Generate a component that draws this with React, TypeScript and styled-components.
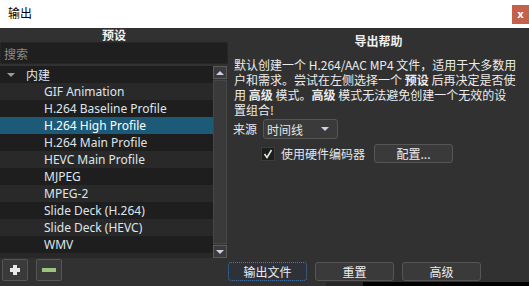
import React from "react";
import styled, { createGlobalStyle } from "styled-components";

const cjk = `"Noto Sans CJK SC", "Noto Sans", sans-serif`;
const latin = `"Noto Sans", "Noto Sans CJK SC", sans-serif`;

const GlobalStyle = createGlobalStyle`
  html, body {
    margin: 0;
    padding: 0;
    background: #ffffff;
  }
  body {
    width: 529px;
    height: 286px;
    overflow: hidden;
    font-family: ${cjk};
    font-size: 12px;
  }
`;

const Window = styled.div`
  display: flex;
  flex-direction: column;
  width: 529px;
  height: 286px;
`;

const TitleBar = styled.div`
  display: flex;
  justify-content: space-between;
  align-items: flex-start;
  height: 28px;
  background: #ffffff;
  color: #000000;
`;

const TitleText = styled.div`
  padding: 6px 0 0 8px;
  line-height: 14px;
  font-size: 12px;
`;

const CloseButton = styled.div`
  display: flex;
  align-items: center;
  justify-content: center;
  width: 17px;
  height: 19px;
  margin-top: 5px;
  background: #c5614b;
  color: #ffffff;
  font-family: "DejaVu Sans", sans-serif;
  font-size: 10px;
  font-weight: bold;
`;

const Body = styled.div`
  display: flex;
  height: 254px;
  background: #313131;
  color: #e2e2e2;
`;

const LeftPanel = styled.div`
  display: flex;
  flex-direction: column;
  width: 228px;
`;

const PanelTitle = styled.div`
  height: 14px;
  line-height: 14px;
  text-align: center;
  font-weight: bold;
  color: #f0f0f0;
`;

const SearchBox = styled.div`
  height: 22px;
  box-sizing: border-box;
  padding: 3px 3px;
  line-height: 16px;
  background: #1f1f1f;
  border: 1px dotted #2c2c2c;
  color: #8a8a8a;
`;

const TreeWrap = styled.div`
  display: flex;
  height: 192px;
  margin-top: 2px;
`;

const TreeList = styled.div`
  flex: 1;
  display: flex;
  flex-direction: column;
  overflow: hidden;
  background: #282828;
`;

const Row = styled.div<{ $alt: boolean; $selected?: boolean; $indent: number }>`
  display: flex;
  align-items: center;
  flex-shrink: 0;
  height: 17px;
  padding-left: ${(p) => p.$indent}px;
  background: ${(p) => (p.$selected ? "#1c5a78" : p.$alt ? "#1e1e1e" : "#292929")};
  color: ${(p) => (p.$selected ? "#ffffff" : "#dfe5ec")};
  font-family: ${latin};
  font-size: 12px;
  white-space: nowrap;
`;

const GroupText = styled.span`
  font-family: ${cjk};
  font-size: 12px;
`;

const Caret = styled.span`
  width: 0;
  height: 0;
  margin-right: 11px;
  border-left: 4px solid transparent;
  border-right: 4px solid transparent;
  border-top: 4px solid #9a9a9a;
`;

const ScrollBar = styled.div`
  display: flex;
  flex-direction: column;
  width: 14px;
  margin-right: 1px;
`;

const ScrollButton = styled.div`
  display: flex;
  align-items: center;
  justify-content: center;
  height: 13px;
  box-sizing: border-box;
  background: #3b3b3b;
  border: 1px solid #5a5a5a;
`;

const Arrow = styled.span<{ $up?: boolean }>`
  width: 0;
  height: 0;
  border-left: 4px solid transparent;
  border-right: 4px solid transparent;
  ${(p) =>
    p.$up ? "border-bottom: 4px solid #cfcfe8;" : "border-top: 4px solid #cfcfe8;"}
`;

const ScrollTrack = styled.div`
  flex: 1;
  display: flex;
  padding: 1px 0;
  background: #353535;
`;

const ScrollThumb = styled.div`
  flex: 1;
  background: #3a3a3a;
  border: 1px solid #464646;
`;

const ToolRow = styled.div`
  display: flex;
  gap: 8px;
  padding: 1px 2px 0;
`;

const ToolButton = styled.div`
  display: flex;
  align-items: center;
  justify-content: center;
  width: 26px;
  height: 22px;
  box-sizing: border-box;
  background: #3a3a3a;
  border: 1px solid #555555;
  border-radius: 2px;
`;

const RightPanel = styled.div`
  flex: 1;
  display: flex;
  flex-direction: column;
`;

const HelpTitle = styled.div`
  margin-top: 6px;
  line-height: 14px;
  text-align: center;
  font-weight: bold;
  color: #f0f0f0;
`;

const HelpText = styled.div`
  margin-top: 9px;
  padding-left: 6px;
  line-height: 15px;
  white-space: nowrap;
  color: #ececec;
  b {
    font-weight: bold;
  }
`;

const FormRow = styled.div<{ $top: number; $left: number }>`
  display: flex;
  align-items: center;
  gap: 6px;
  margin-top: ${(p) => p.$top}px;
  padding-left: ${(p) => p.$left}px;
`;

const Label = styled.span`
  line-height: 14px;
  color: #e6e6e6;
`;

const Combo = styled.div`
  display: flex;
  align-items: center;
  justify-content: space-between;
  width: 75px;
  height: 20px;
  box-sizing: border-box;
  padding: 0 8px 0 3px;
  background: #3a3a3a;
  border: 1px solid #565656;
  border-radius: 3px;
  color: #e6e6e6;
`;

const CheckBox = styled.div`
  display: flex;
  align-items: center;
  justify-content: center;
  width: 14px;
  height: 14px;
  box-sizing: border-box;
  background: #1e1e1e;
  border: 1px solid #3c3c3c;
`;

const Button = styled.div<{ $focused?: boolean }>`
  display: flex;
  align-items: center;
  justify-content: center;
  width: 79px;
  height: 19px;
  box-sizing: border-box;
  background: ${(p) => (p.$focused ? "#2e3238" : "#3a3a3a")};
  border: 1px ${(p) => (p.$focused ? "dotted #4a78b0" : "solid #565656")};
  border-radius: 3px;
  color: #ececec;
  font-size: 12px;
`;

const Spacer = styled.div`
  flex: 1;
`;

const ButtonRow = styled.div`
  display: flex;
  gap: 8px;
  padding: 0 0 1px 0;
`;

const BottomStrip = styled.div`
  display: flex;
  height: 4px;
  background: #313131;
`;

const Shadow = styled.div<{ $w: number; $c: string }>`
  width: ${(p) => p.$w}px;
  background: ${(p) => p.$c};
`;

const presets = [
  "GIF Animation",
  "H.264 Baseline Profile",
  "H.264 High Profile",
  "H.264 Main Profile",
  "HEVC Main Profile",
  "MJPEG",
  "MPEG-2",
  "Slide Deck (H.264)",
  "Slide Deck (HEVC)",
  "WMV",
];

export default function App() {
  return (
    <Window>
      <GlobalStyle />
      <TitleBar>
        <TitleText>输出</TitleText>
        <CloseButton>x</CloseButton>
      </TitleBar>
      <Body>
        <LeftPanel>
          <PanelTitle>预设</PanelTitle>
          <SearchBox>搜索</SearchBox>
          <TreeWrap>
            <TreeList>
              <Row $alt $indent={7}>
                <Caret />
                <GroupText>内建</GroupText>
              </Row>
              {presets.map((name, i) => (
                <Row key={name} $alt={i % 2 === 1} $selected={i === 2} $indent={44}>
                  {name}
                </Row>
              ))}
            </TreeList>
            <ScrollBar>
              <ScrollButton>
                <Arrow $up />
              </ScrollButton>
              <ScrollTrack>
                <ScrollThumb />
              </ScrollTrack>
              <ScrollButton>
                <Arrow />
              </ScrollButton>
            </ScrollBar>
          </TreeWrap>
          <ToolRow>
            <ToolButton>
              <svg width="12" height="12" viewBox="0 0 12 12">
                <rect x="4" y="1" width="4" height="10" fill="#e8e8e8" />
                <rect x="1" y="4" width="10" height="4" fill="#e8e8e8" />
              </svg>
            </ToolButton>
            <ToolButton>
              <svg width="14" height="6" viewBox="0 0 14 6">
                <rect x="0" y="1" width="14" height="4" fill="#9cc47e" />
              </svg>
            </ToolButton>
          </ToolRow>
        </LeftPanel>
        <RightPanel>
          <HelpTitle>导出帮助</HelpTitle>
          <HelpText>
            默认创建一个 H.264/AAC MP4 文件，适用于大多数用
            <br />
            户和需求。尝试在左侧选择一个 <b>预设</b> 后再决定是否使
            <br />
            用 <b>高级</b> 模式。<b>高级</b> 模式无法避免创建一个无效的设
            <br />
            置组合!
          </HelpText>
          <FormRow $top={2} $left={5}>
            <Label>来源</Label>
            <Combo>
              <span>时间线</span>
              <Arrow />
            </Combo>
          </FormRow>
          <FormRow $top={5} $left={33}>
            <CheckBox>
              <svg width="10" height="10" viewBox="0 0 10 10">
                <polyline
                  points="1.5,5 4,8.5 8.5,1"
                  fill="none"
                  stroke="#dcebd2"
                  strokeWidth="1.6"
                />
              </svg>
            </CheckBox>
            <Label>使用硬件编码器</Label>
            <Button style={{ marginLeft: 3 }}>配置...</Button>
          </FormRow>
          <Spacer />
          <ButtonRow>
            <Button $focused>输出文件</Button>
            <Button>重置</Button>
            <Button>高级</Button>
          </ButtonRow>
        </RightPanel>
      </Body>
      <BottomStrip>
        <Spacer />
        <Shadow $w={37} $c="#262626" />
        <Shadow $w={166} $c="#000000" />
      </BottomStrip>
    </Window>
  );
}
